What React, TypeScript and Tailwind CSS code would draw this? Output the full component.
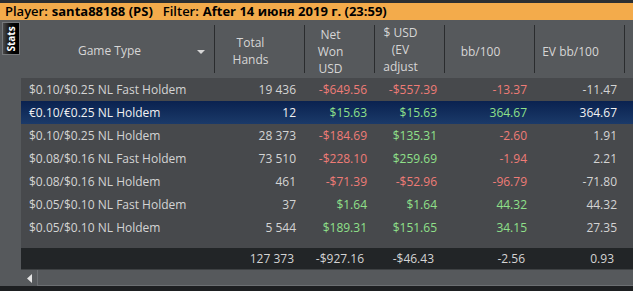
import React from 'react';

type Row = {
  game: string;
  hands: string;
  net: string;
  evNet: string;
  bb: string;
  evBb: string;
  selected?: boolean;
};

const rows: Row[] = [
  { game: '$0.10/$0.25 NL Fast Holdem', hands: '19 436', net: '-$649.56', evNet: '-$557.39', bb: '-13.37', evBb: '-11.47' },
  { game: '€0.10/€0.25 NL Holdem', hands: '12', net: '$15.63', evNet: '$15.63', bb: '364.67', evBb: '364.67', selected: true },
  { game: '$0.10/$0.25 NL Holdem', hands: '28 373', net: '-$184.69', evNet: '$135.31', bb: '-2.60', evBb: '1.91' },
  { game: '$0.08/$0.16 NL Fast Holdem', hands: '73 510', net: '-$228.10', evNet: '$259.69', bb: '-1.94', evBb: '2.21' },
  { game: '$0.08/$0.16 NL Holdem', hands: '461', net: '-$71.39', evNet: '-$52.96', bb: '-96.79', evBb: '-71.80' },
  { game: '$0.05/$0.10 NL Fast Holdem', hands: '37', net: '$1.64', evNet: '$1.64', bb: '44.32', evBb: '44.32' },
  { game: '$0.05/$0.10 NL Holdem', hands: '5 544', net: '$189.31', evNet: '$151.65', bb: '34.15', evBb: '27.35' },
];

// red for losses, green for wins
const tone = (v: string) => (v.startsWith('-') ? 'text-[#ef7c77]' : 'text-[#8fe08a]');

const Divider = () => <div className="w-px h-[48px] bg-[#2a2c2e] shrink-0" />;

const HeaderCell: React.FC<{ w: string; children: React.ReactNode }> = ({ w, children }) => (
  <div className={`${w} shrink-0 h-full flex items-center justify-center pt-[4px] pr-[18px] text-center leading-[17px]`}>
    {children}
  </div>
);

export default function App() {
  return (
    <div className="w-[633px] h-[291px] bg-[#1d1f21] flex flex-col overflow-hidden font-['Open_Sans','Noto_Sans',sans-serif] text-[12px]">
      <div className="h-[3px] bg-[#2c2f32]" />
      <div className="h-[17px] bg-[#f3ab4b] flex items-center pl-[5px] text-black text-[13px] leading-none whitespace-nowrap">
        <span className="font-semibold">Player:</span>
        <span className="font-bold ml-[4px]">santa88188 (PS)</span>
        <span className="font-semibold ml-[10px]">Filter:</span>
        <span className="font-bold ml-[4px]">After 14 июня 2019 г. (23:59)</span>
      </div>

      <div className="flex flex-1 min-h-0">
        {/* side tab strip */}
        <div className="w-[21px] bg-[#56595c] pt-[2px] pl-[2px] shrink-0">
          <div className="w-[18px] h-[33px] border border-[#75787b] bg-gradient-to-r from-[#4a4a4a] via-[#0a0a0a] to-black flex items-center justify-center">
            <span className="-rotate-90 text-white font-bold text-[10px] leading-none">Stats</span>
          </div>
        </div>

        <div className="flex-1 flex flex-col bg-[#47494c] min-w-0">
          {/* header */}
          <div className="h-[58px] bg-[#56595c] flex items-center text-[#d6d6d6] shrink-0">
            <div className="w-[193px] shrink-0 h-full flex items-center pt-[4px] relative">
              <span className="flex-1 text-center pr-[16px]">Game Type</span>
              <svg className="absolute right-[9px] top-[30px]" width="8" height="4" viewBox="0 0 8 4">
                <path d="M0 0H8L4 4Z" fill="#d6d6d6" />
              </svg>
            </div>
            <Divider />
            <HeaderCell w="w-[89px]">Total<br />Hands</HeaderCell>
            <Divider />
            <HeaderCell w="w-[69px]">Net<br />Won<br />USD</HeaderCell>
            <Divider />
            <HeaderCell w="w-[69px]">
              <span className="-mt-[4px]">$ USD<br />(EV<br />adjust</span>
            </HeaderCell>
            <Divider />
            <HeaderCell w="w-[89px]">bb/100</HeaderCell>
            <Divider />
            <HeaderCell w="w-[89px]">EV bb/100</HeaderCell>
            <Divider />
          </div>

          {/* rows */}
          {rows.map((r) => (
            <div
              key={r.game}
              className={`h-[23px] flex items-center shrink-0 whitespace-nowrap ${
                r.selected ? 'bg-gradient-to-b from-[#0a2250] to-[#1b3a69] text-[#f2f2f2]' : 'text-[#d4d4d4]'
              }`}
            >
              <div className="w-[194px] pl-[8px] shrink-0">{r.game}</div>
              <div className="w-[90px] pr-[9px] text-right shrink-0">{r.hands}</div>
              <div className={`w-[70px] pr-[8px] text-right shrink-0 ${tone(r.net)}`}>{r.net}</div>
              <div className={`w-[70px] pr-[8px] text-right shrink-0 ${tone(r.evNet)}`}>{r.evNet}</div>
              <div className={`w-[90px] pr-[8px] text-right shrink-0 ${tone(r.bb)}`}>{r.bb}</div>
              <div className="w-[90px] pr-[8px] text-right shrink-0">{r.evBb}</div>
            </div>
          ))}

          <div className="flex-1" />

          {/* totals */}
          <div className="h-[21px] bg-[#222527] flex items-center text-[#d4d4d4] shrink-0 whitespace-nowrap">
            <div className="w-[194px] shrink-0" />
            <div className="w-[90px] pr-[11px] text-right shrink-0">127 373</div>
            <div className="w-[70px] pr-[11px] text-right shrink-0">-$927.16</div>
            <div className="w-[70px] pr-[11px] text-right shrink-0">-$46.43</div>
            <div className="w-[90px] pr-[10px] text-right shrink-0">-2.56</div>
            <div className="w-[90px] pr-[11px] text-right shrink-0">0.93</div>
          </div>

          {/* horizontal scrollbar */}
          <div className="h-[17px] flex bg-[#56595c] border-t border-[#3e4143] shrink-0">
            <div className="w-[17px] h-full border-r border-[#6c6f72] flex items-center justify-center">
              <svg width="5" height="9" viewBox="0 0 5 9">
                <path d="M5 0V9L0 4.5Z" fill="#e4e4e4" />
              </svg>
            </div>
            <div className="flex-1 border-b border-[#6c6f72]" />
          </div>
        </div>
      </div>

      <div className="h-[5px] bg-[#1d1f21] shrink-0" />
    </div>
  );
}
